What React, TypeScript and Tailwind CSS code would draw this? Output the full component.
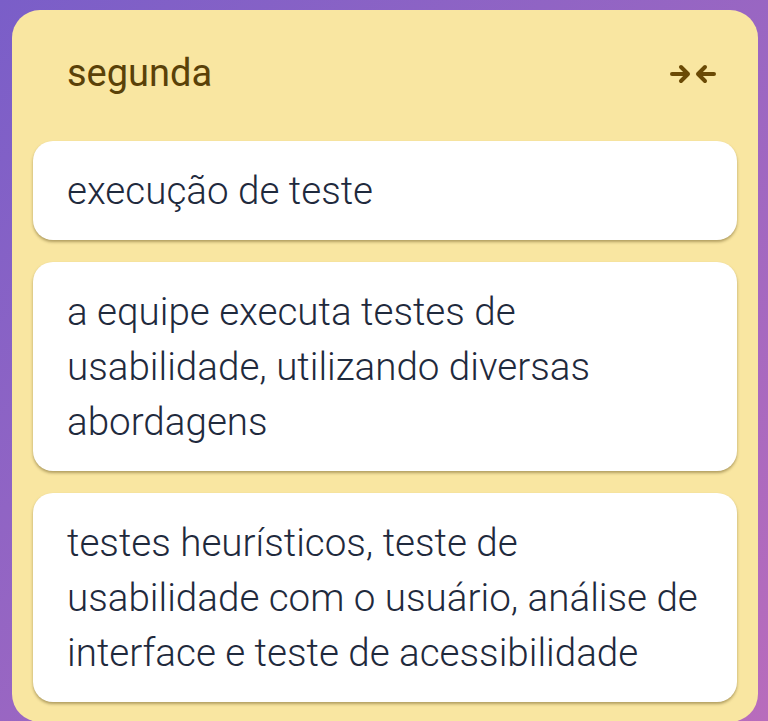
import React from "react";

function CollapseIcon() {
  return (
    <svg width="48" height="24" viewBox="0 0 48 24" fill="none">
      <g stroke="#6b4a05" strokeWidth="4" strokeLinecap="round" strokeLinejoin="round">
        <path d="M3 12h16M12 5l7 7-7 7" />
        <path d="M45 12H29M36 5l-7 7 7 7" />
      </g>
    </svg>
  );
}

const items = [
  "execução de teste",
  "a equipe executa testes de usabilidade, utilizando diversas abordagens",
  "testes heurísticos, teste de usabilidade com o usuário, análise de interface e teste de acessibilidade",
];

function App() {
  return (
    <div
      className="w-[768px] h-[721px] overflow-hidden bg-gradient-to-br from-[#7a5ec8] to-[#b86cbc] pt-[10px] pl-[12px] pr-[10px]"
      style={{ fontFamily: "Roboto, 'Noto Sans', sans-serif" }}
    >
      <div className="bg-[#f9e6a1] rounded-[28px] px-[21px] pb-[20px]">
        <div className="flex items-center justify-between h-[131px] pl-[34px] pr-[20px] pb-[4px]">
          <h2 className="text-[38px] font-normal text-[#5a4108]">segunda</h2>
          <CollapseIcon />
        </div>
        <div className="flex flex-col gap-[22px]">
          {items.map((text, i) => (
            <div
              key={i}
              className="bg-white rounded-[20px] pl-[34px] pr-[30px] py-[22px] shadow-[0_2px_3px_rgba(90,70,20,0.45)]"
            >
              <p className="text-[38.6px] font-light leading-[55px] text-[#1f2a3d]">{text}</p>
            </div>
          ))}
        </div>
      </div>
    </div>
  );
}

export default App;
